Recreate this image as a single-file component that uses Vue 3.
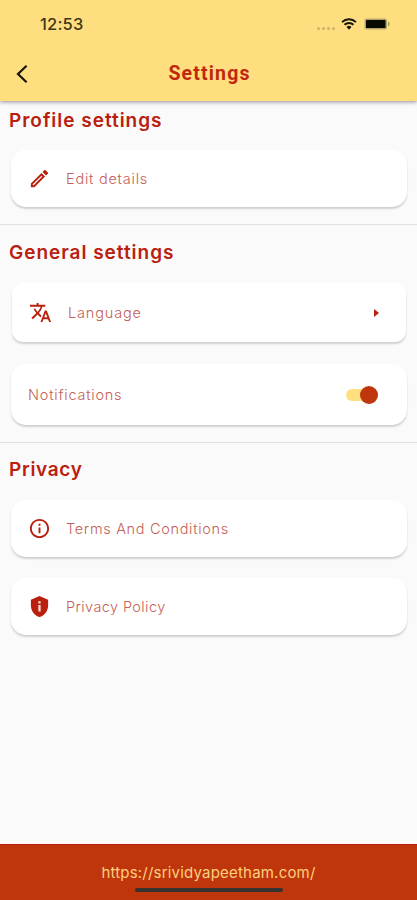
<template>
  <div class="screen">
    <header class="app-header">
      <div class="status-bar">
        <span class="clock">12:53</span>
        <div class="status-icons">
          <span class="signal"><i v-for="n in 4" :key="n"></i></span>
          <svg class="wifi" viewBox="0 0 16 12">
            <path d="M1 4.1a10.2 10.2 0 0 1 14 0" />
            <path d="M3.5 6.8a6.5 6.5 0 0 1 9 0" />
            <path class="wifi-dot" d="M5.5 9a3.7 3.7 0 0 1 5 0L8 11.8z" />
          </svg>
          <svg class="battery" viewBox="0 0 27 12">
            <rect x=".5" y=".5" width="22.5" height="11" rx="2" fill="#b5a563" />
            <rect x="2" y="2" width="19.5" height="8" rx=".6" fill="#080803" />
            <path d="M24 3.5c2.2.8 2.2 4.2 0 5z" fill="#a8985a" />
          </svg>
        </div>
      </div>
      <div class="title-bar">
        <button class="back" aria-label="Back" @click="goBack">
          <svg viewBox="0 0 12 20"><path d="M10.6 1.8 2 10l8.6 8.2" /></svg>
        </button>
        <h1>Settings</h1>
      </div>
    </header>

    <main class="content">
      <section class="profile">
        <h2>Profile settings</h2>
        <div class="card">
          <svg class="icon" viewBox="0 0 24 24">
            <path d="m14.06 9.02.92.92L5.92 19H5v-.92l9.06-9.06M17.66 3c-.25 0-.51.1-.7.29l-1.83 1.83 3.75 3.75 1.83-1.83a.996.996 0 0 0 0-1.41l-2.34-2.34c-.2-.2-.45-.29-.71-.29zm-3.6 3.19L3 17.25V21h3.75L17.81 9.94l-3.75-3.75z" />
          </svg>
          <span class="label edit">Edit details</span>
        </div>
      </section>

      <section class="general">
        <h2>General settings</h2>
        <div class="card language">
          <svg class="icon" viewBox="0 0 24 24">
            <path d="m12.87 15.07-2.54-2.51.03-.03A17.52 17.52 0 0 0 14.07 6H17V4h-7V2H8v2H1v1.99h11.17C11.5 7.92 10.44 9.75 9 11.35 8.07 10.32 7.3 9.19 6.69 8h-2c.73 1.63 1.73 3.17 2.98 4.56l-5.09 5.02L4 19l5-5 3.11 3.11.76-2.04zM18.5 10h-2L12 22h2l1.12-3h4.75L21 22h2l-4.5-12zm-2.62 7 1.62-4.33L19.12 17h-3.24z" />
          </svg>
          <span class="label lang">Language</span>
          <svg class="arrow" viewBox="0 0 5 8"><path d="m0 0 5 4-5 4z" /></svg>
        </div>
        <div class="card notifications">
          <span class="label notify">Notifications</span>
          <button
            class="switch"
            :class="{ off: !notifications }"
            role="switch"
            :aria-checked="notifications"
            @click="notifications = !notifications"
          >
            <span class="knob"></span>
          </button>
        </div>
      </section>

      <section class="privacy">
        <h2>Privacy</h2>
        <div class="card">
          <svg class="icon" viewBox="0 0 24 24">
            <path d="M11 7h2v2h-2zm0 4h2v6h-2zm1-9C6.48 2 2 6.48 2 12s4.48 10 10 10 10-4.48 10-10S17.52 2 12 2zm0 18c-4.41 0-8-3.59-8-8s3.59-8 8-8 8 3.59 8 8-3.59 8-8 8z" />
          </svg>
          <span class="label terms">Terms And Conditions</span>
        </div>
        <div class="card policy">
          <svg class="icon" viewBox="0 0 24 24">
            <path d="M12 1 3 5v6c0 5.55 3.84 10.74 9 12 5.16-1.26 9-6.45 9-12V5l-9-4z" />
            <path class="cutout" d="M10.8 6.5h2.4v2.3h-2.4zm0 4h2.4v6.7h-2.4z" />
          </svg>
          <span class="label policy-label">Privacy Policy</span>
        </div>
      </section>
    </main>

    <footer class="footer">
      <span class="url">https://srividyapeetham.com/</span>
      <div class="home-indicator"></div>
    </footer>
  </div>
</template>

<script setup>
import { ref } from "vue";

const notifications = ref(true);

const goBack = () => {
  window.history.back();
};
</script>

<style>
body {
  margin: 0;
}
</style>

<style scoped>
.screen {
  display: flex;
  flex-direction: column;
  width: 100%;
  height: 900px;
  overflow: hidden;
  background: #fafafa;
  color: #b9200e;
  font-family: "Inter", "Open Sans", sans-serif;
}

.screen * {
  box-sizing: border-box;
}

button {
  padding: 0;
  border: 0;
  background: none;
}

.app-header {
  flex: none;
  height: 101px;
  background: #ffde80;
  box-shadow: 0 1px 4px rgba(40, 40, 60, 0.5);
  z-index: 1;
}

.status-bar {
  display: flex;
  align-items: center;
  justify-content: space-between;
  height: 48px;
  padding: 0 26px 0 40px;
}

.clock {
  color: #3f3617;
  font-size: 16.5px;
  font-weight: 500;
  letter-spacing: 0.2px;
}

.status-icons {
  display: flex;
  align-items: center;
}

.signal {
  display: flex;
  gap: 2px;
  margin: 9px 6px 0 0;
}

.signal i {
  width: 3px;
  height: 3px;
  border-radius: 50%;
  background: #cfb263;
}

.wifi {
  width: 16px;
  height: 12px;
  margin-right: 7px;
  fill: none;
  stroke: #17140a;
  stroke-width: 1.9;
}

.wifi .wifi-dot {
  fill: #17140a;
  stroke: none;
}

.battery {
  width: 27px;
  height: 12px;
}

.title-bar {
  display: grid;
  grid-template-columns: 48px 1fr 48px;
  align-items: center;
  height: 51px;
}

.back {
  height: 40px;
  padding-left: 16px;
  text-align: left;
}

.back svg {
  display: block;
  width: 12px;
  height: 20px;
  fill: none;
  stroke: #17130a;
  stroke-width: 2.2;
}

h1 {
  margin: 0;
  padding-left: 2px;
  font-family: "Roboto", sans-serif;
  font-size: 19.5px;
  font-weight: 700;
  letter-spacing: 1.15px;
  text-align: center;
  color: #bf280f;
}

.content {
  flex: 1;
}

section {
  padding: 0 10px 0 11px;
}

h2 {
  margin: 0 0 0 -2px;
  font-size: 19px;
  font-weight: 560;
  line-height: 24px;
  letter-spacing: 0.98px;
  white-space: nowrap;
}

.profile {
  height: 124px;
  padding-top: 8px;
  border-bottom: 1px solid #e0e0e0;
}

.general {
  height: 218px;
  padding-top: 16px;
  border-bottom: 1px solid #e0e0e0;
}

.privacy {
  padding-top: 15px;
}

.privacy h2 {
  letter-spacing: 0.7px;
}

.card {
  display: flex;
  align-items: center;
  height: 57px;
  margin-top: 17px;
  padding: 0 28px 0 17px;
  border-radius: 15px;
  background: #fff;
  box-shadow: 0 2px 2px rgba(0, 0, 0, 0.17);
}

.card.language {
  height: 59px;
  margin: 18px 1px 0;
  border-radius: 11px;
}

.card.notifications {
  height: 61px;
  margin-top: 22px;
}

.privacy .card {
  margin-top: 18px;
}

.privacy .card.policy {
  margin-top: 21px;
}

.icon {
  flex: none;
  width: 23px;
  height: 23px;
  margin-right: 15px;
  fill: #b9200e;
}

.cutout {
  fill: #f7dcd6;
}

.label {
  font-size: 14.5px;
  font-weight: 300;
  color: #c25f57;
  white-space: nowrap;
}

.edit {
  letter-spacing: 0.76px;
}

.lang {
  padding-left: 1px;
  letter-spacing: 0.85px;
}

.notify {
  letter-spacing: 0.78px;
}

.terms {
  letter-spacing: 0.68px;
}

.policy-label {
  letter-spacing: 0.4px;
}

.arrow {
  width: 5px;
  height: 8px;
  margin-left: auto;
  margin-right: -1px;
  fill: #b9200e;
}

.switch {
  display: flex;
  justify-content: flex-end;
  align-items: center;
  width: 32px;
  height: 12px;
  margin-left: auto;
  margin-right: 1px;
  border-radius: 6px;
  background: #ffdf80;
}

.knob {
  width: 18px;
  height: 18px;
  flex: none;
  border-radius: 50%;
  background: #bf360c;
}

.switch.off {
  justify-content: flex-start;
}

.footer {
  display: flex;
  flex-direction: column;
  align-items: center;
  flex: none;
  height: 56px;
  padding-top: 18px;
  border-top: 1px solid #b71c0c;
  background: #bf360c;
}

.url {
  color: #ffcf7d;
  font-size: 15px;
  line-height: 20px;
  letter-spacing: 0.2px;
  white-space: nowrap;
}

.home-indicator {
  width: 148px;
  height: 4px;
  margin-top: 5px;
  border-radius: 2px;
  background: #35332f;
}
</style>
